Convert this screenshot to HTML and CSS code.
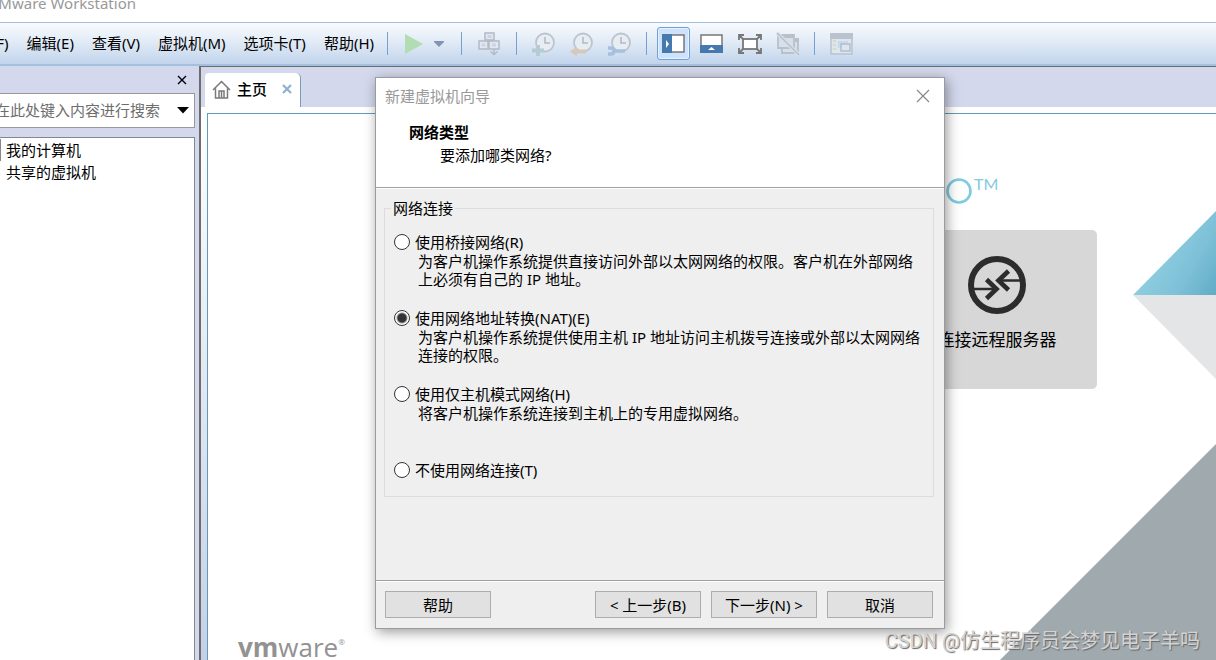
FILE: index.html
```
<!DOCTYPE html>
<html lang="zh-CN">
<head>
<meta charset="utf-8">
<title>VMware Workstation</title>
<link rel="stylesheet" href="styles.css">
</head>
<body>
<div class="app">
  <header class="titlebar"><span class="titlebar-text">VMware Workstation</span></header>

  <div class="menubar">
    <nav class="menu">
      <button class="menu-item">文件(F)</button>
      <button class="menu-item">编辑(E)</button>
      <button class="menu-item">查看(V)</button>
      <button class="menu-item">虚拟机(M)</button>
      <button class="menu-item">选项卡(T)</button>
      <button class="menu-item">帮助(H)</button>
    </nav>
    <div class="toolbar">
      <span class="sep"></span>
      <div class="group group-power">
        <button class="tool" aria-label="开机"><svg width="20" height="22" viewBox="0 0 20 22"><path d="M1 1v20l18-10z" fill="#b2dcb3"/></svg></button>
        <button class="tool" aria-label="电源选项"><svg width="12" height="8" viewBox="0 0 12 8"><path d="M1 1h10v1L6 7 1 2z" fill="#8294b5"/></svg></button>
      </div>
      <span class="sep"></span>
      <div class="group group-send">
        <button class="tool" aria-label="发送"><svg width="22" height="24" viewBox="0 0 22 24" fill="#e2e8f0" stroke="#b3b9c3" stroke-width="1.500"><rect x="7" y="1" width="9" height="7"/><rect x="1" y="9" width="9" height="8"/><rect x="11" y="9" width="10" height="8"/><path d="M9.500 4.500h4M3.500 13h4M14 13h4" stroke="#c7d6e8" stroke-width="3"/><path d="M16 17v5M12.500 19.500l3.500 3 3.500-3" fill="none"/></svg></button>
      </div>
      <span class="sep"></span>
      <div class="group group-snap">
        <button class="tool" aria-label="拍摄快照"><svg width="23" height="24" viewBox="0 0 23 24"><circle cx="13" cy="10.500" r="9" fill="#e8edf4" stroke="#bcc4ce" stroke-width="1.800"/><path d="M13 5v6h5" fill="none" stroke="#b3bbc5" stroke-width="1.600"/><path d="M0 18.500h12M6 13v11" stroke="#b4ccd2" stroke-width="4"/></svg></button>
        <button class="tool" aria-label="恢复快照"><svg width="23" height="24" viewBox="0 0 23 24"><circle cx="13" cy="10.500" r="9" fill="#e8edf4" stroke="#bcc4ce" stroke-width="1.800"/><path d="M13 5v6h5" fill="none" stroke="#b3bbc5" stroke-width="1.600"/><path d="M0 19.500l7-5v3h9v4H7v3z" fill="#d8c8ba"/></svg></button>
        <button class="tool" aria-label="管理快照"><svg width="23" height="24" viewBox="0 0 23 24"><circle cx="13" cy="10.500" r="9" fill="#e8edf4" stroke="#bcc4ce" stroke-width="1.800"/><path d="M13 5v6h5" fill="none" stroke="#b3bbc5" stroke-width="1.600"/><path d="M0 16h3q3 0 3 3t-3 3H0M6 19h11" fill="none" stroke="#a6c0de" stroke-width="3.500"/></svg></button>
      </div>
      <span class="sep"></span>
      <div class="group group-view">
        <button class="tool view-tool active" aria-label="显示库"><svg width="23" height="19" viewBox="0 0 23 19"><rect x="1" y="1" width="21" height="17" fill="#fff" stroke="#777" stroke-width="1.500"/><path d="M0 0h10v19H0z" fill="#4679ad"/><path d="M4 6v8l3-4z" fill="#fff"/></svg></button>
        <button class="tool view-tool" aria-label="显示缩略图"><svg width="23" height="19" viewBox="0 0 23 19"><rect x="1" y="1" width="21" height="17" fill="#fff" stroke="#777" stroke-width="1.500"/><path d="M0 11h23v8H0z" fill="#4679ad"/><path d="M8 16h7l-3.500-3z" fill="#fff"/></svg></button>
        <button class="tool view-tool" aria-label="全屏"><svg width="24" height="20" viewBox="0 0 24 20" stroke="#777" stroke-width="1.800" fill="none"><rect x="5" y="5" width="14" height="10" fill="#fff"/><path d="M1 6V1h5M1 1l4 4M18 1h5v5M23 1l-4 4M1 14v5h5M1 19l4-4M18 19h5v-5M23 19l-4-4"/></svg></button>
        <button class="tool view-tool" aria-label="Unity"><svg width="24" height="24" viewBox="0 0 24 24" fill="#d6e0ec" stroke="#b9c0ca" stroke-width="1.800"><path d="M6 8h16v13H6z"/><path d="M19 8h4" stroke-width="4"/><path d="M2 3h16v13H2z"/><path d="M2 4h16" stroke-width="4"/><path d="M1 1l22 22" stroke="#d9dfe7" stroke-width="4"/><path d="M1 1l22 22" stroke-width="1.500"/></svg></button>
      </div>
      <span class="sep"></span>
      <div class="group">
        <button class="tool" aria-label="控制台视图"><svg width="23" height="22" viewBox="0 0 23 22"><rect x="1" y="1" width="21" height="20" fill="#dce6f0" stroke="#bac2cd" stroke-width="1.500"/><path d="M0 0h23v6H0z" fill="#bac2cd"/><path d="M3 8h3M3 12h3M3 16h3" stroke="#dcd9bc" stroke-width="2"/><path d="M8 8h10v7H8z" fill="#c9dbeb"/><rect x="11" y="11" width="9" height="7" fill="#dce6f0" stroke="#b4bdc9" stroke-width="1.500"/></svg></button>
      </div>
    </div>
  </div>

  <div class="workspace">
    <aside class="sidebar">
      <div class="sidebar-head">
        <button class="plain" aria-label="关闭库"><svg width="10" height="10" viewBox="0 0 10 10"><path d="M1 1l8 8M9 1L1 9" stroke="#000" stroke-width="1.400"/></svg></button>
      </div>
      <div class="search">
        <input class="search-input" type="text" aria-label="搜索" placeholder="在此处键入内容进行搜索" dir="rtl">
        <button class="plain" aria-label="搜索选项"><svg width="12" height="7" viewBox="0 0 12 7"><path d="M0 0h12L6 6.500z" fill="#000"/></svg></button>
      </div>
      <ul class="tree">
        <li class="tree-item tree-root">我的计算机</li>
        <li class="tree-item">共享的虚拟机</li>
      </ul>
    </aside>

    <main class="main">
      <div class="tabs">
        <div class="tab">
          <svg width="19" height="19" viewBox="0 0 19 19" fill="none" stroke="#7a7a7a" stroke-width="1.500"><path d="M1 10l8.500-8.500L18 10M3.500 8.500V18h12V8.500M7 18v-7h5v7M9.500 11v7"/></svg>
          <span class="tab-label">主页</span>
          <button class="plain" aria-label="关闭标签"><svg width="10" height="10" viewBox="0 0 10 10"><path d="M1 1l8 8M9 1L1 9" stroke="#8db1cf" stroke-width="2.200"/></svg></button>
        </div>
      </div>
      <div class="page">
        <div class="home">
          <svg class="art" width="216" height="449" viewBox="0 0 216 449">
            <defs><linearGradient id="sky" gradientUnits="userSpaceOnUse" x1="160" y1="40" x2="222" y2="76"><stop offset="0" stop-color="#8ecde0"/><stop offset="0.500" stop-color="#7dc0d7"/><stop offset="1" stop-color="#60abc6"/></linearGradient></defs>
            <path d="M133 84L216 0v84z" fill="url(#sky)"/>
            <path d="M133 84h83v84z" fill="#e4e5e7"/>
            <path d="M216 233v216H0z" fill="#9fa9ae"/>
          </svg>
          <div class="brand">
            <svg width="26" height="26" viewBox="0 0 26 26"><circle cx="13" cy="13" r="11.500" fill="none" stroke="#7fcbdf" stroke-width="2.600"/></svg>
            <span class="brand-tm">TM</span>
          </div>
          <button class="card">
            <svg width="58" height="58" viewBox="0 0 58 58" fill="none" stroke="#2c2c2c"><circle cx="29" cy="29" r="26" stroke-width="6"/><path d="M6 33h23M52 24.500H30" stroke-width="2.600"/><path d="M18.500 23.500L28.500 33l-10 9.500M40.500 15L30.500 24.500l10 9.500" stroke-width="4.600"/></svg>
            <span>连接远程服务器</span>
          </button>
          <div class="vmware"><b>vm</b>ware<span class="reg">®</span></div>
        </div>
      </div>
    </main>
  </div>

  <section class="dialog" role="dialog" aria-labelledby="dlg-title">
    <div class="dialog-head">
      <div class="dialog-title">
        <span id="dlg-title">新建虚拟机向导</span>
        <button class="plain" aria-label="关闭"><svg width="14" height="14" viewBox="0 0 14 14"><path d="M1 1l12 12M13 1L1 13" stroke="#888" stroke-width="1.200"/></svg></button>
      </div>
      <h1 class="step-title">网络类型</h1>
      <p class="step-text">要添加哪类网络?</p>
    </div>
    <div class="dialog-body">
      <fieldset class="group-box">
        <legend>网络连接</legend>
        <div class="option">
          <label class="option-label"><input type="radio" name="net">使用桥接网络(R)</label>
          <p class="option-text">为客户机操作系统提供直接访问外部以太网网络的权限。客户机在外部网络<br>上必须有自己的 IP 地址。</p>
        </div>
        <div class="option">
          <label class="option-label"><input type="radio" name="net" checked>使用网络地址转换(NAT)(E)</label>
          <p class="option-text">为客户机操作系统提供使用主机 IP 地址访问主机拨号连接或外部以太网网络<br>连接的权限。</p>
        </div>
        <div class="option">
          <label class="option-label"><input type="radio" name="net">使用仅主机模式网络(H)</label>
          <p class="option-text">将客户机操作系统连接到主机上的专用虚拟网络。</p>
        </div>
        <div class="option">
          <label class="option-label"><input type="radio" name="net">不使用网络连接(T)</label>
        </div>
      </fieldset>
    </div>
    <div class="dialog-foot">
      <button class="btn btn-help">帮助</button>
      <button class="btn">&lt; 上一步(B)</button>
      <button class="btn">下一步(N) &gt;</button>
      <button class="btn">取消</button>
    </div>
  </section>

  <div class="watermark">CSDN @仿生程序员会梦见电子羊吗</div>
</div>
</body>
</html>
```

FILE: styles.css
```
* { box-sizing: border-box; }

body {
  margin: 0;
  font: 15px/20px "Noto Sans", "Noto Sans CJK SC", sans-serif;
  color: #000;
}

button {
  font: inherit;
  color: inherit;
  padding: 0;
  border: 0;
  background: none;
  white-space: nowrap;
}

svg { display: block; flex: none; }
p, h1, ul { margin: 0; padding: 0; }

.app {
  position: relative;
  display: flex;
  flex-direction: column;
  height: 100vh;
  overflow: hidden;
}

/* Title bar */
.titlebar {
  display: flex;
  justify-content: flex-end;
  flex: none;
  width: 136px;
  height: 22px;
  line-height: 6px;
  color: #999;
  white-space: nowrap;
}

/* Menu and toolbar */
.menubar {
  display: flex;
  align-items: center;
  flex: none;
  height: 44px;
  border-top: 1px solid #9cc0e4;
  border-bottom: 2px solid #a3c0e0;
  background: linear-gradient(#f9fbfe, #dfe9f5 50%, #c1d4ec);
}
.menu {
  display: flex;
  justify-content: flex-end;
  gap: 18px;
  width: 374px;
  margin-right: 13px;
  padding-bottom: 2px;
  overflow: hidden;
}
.toolbar { display: flex; align-items: center; }
.sep {
  width: 1px;
  height: 23px;
  margin-right: 15px;
  background: #779fd2;
}
.group { display: flex; align-items: center; margin-right: 15px; }
.group-power { gap: 9px; padding: 0 1px; }
.group-send { padding: 0 1px; }
.group-snap { gap: 15px; }
.group-view { gap: 5px; margin: 0 10px 0 -5px; }
.view-tool {
  display: flex;
  align-items: center;
  justify-content: center;
  width: 33px;
  height: 33px;
  border: 1px solid transparent;
  border-radius: 3px;
}
.active {
  border-color: #6f9fd8;
  background: #cfe2fb;
  box-shadow: inset 0 0 0 1px #e8f2fe;
}

/* Library panel */
.workspace {
  display: flex;
  flex: 1;
  min-height: 0;
  background: #d3d8ec;
}
.sidebar {
  display: flex;
  flex-direction: column;
  flex: none;
  width: 199px;
  padding-right: 4px;
}
.sidebar-head {
  display: flex;
  align-items: center;
  justify-content: flex-end;
  height: 27px;
  padding-right: 8px;
}
.search {
  display: flex;
  align-items: center;
  gap: 17px;
  height: 35px;
  padding-right: 5px;
  border: 1px solid #999;
  border-left: 0;
  background: #fff;
}
.search-input {
  flex: 1;
  min-width: 0;
  padding: 0 0 2px;
  border: 0;
  outline: 0;
  font: inherit;
  background: none;
}
.search-input::placeholder { color: #6d6d6d; }
.tree {
  flex: 1;
  margin-top: 9px;
  padding-top: 1px;
  border: 1px solid #828790;
  border-width: 1px 1px 0 0;
  background: #fff;
  list-style: none;
}
.tree-item { padding-left: 6px; line-height: 22px; }
.tree-root { box-shadow: inset 1px 0 #888; }

/* Tabs and home page */
.main {
  display: flex;
  flex-direction: column;
  flex: 1;
  min-width: 0;
  border-top: 1px solid #6c6c6c;
  border-left: 2px solid #6c6c6c;
}
.tabs { height: 40px; padding: 6px 0 0 4px; }
.tab {
  display: flex;
  align-items: center;
  width: 96px;
  height: 34px;
  padding: 0 8px 2px 7px;
  border-right: 1px solid #7a9cb5;
  border-radius: 4px 5px 0 0;
  background: #fff;
}
.tab-label { flex: 1; padding-left: 6px; font-weight: 500; }
.page {
  flex: 1;
  display: flex;
  padding: 6px 0 0 6px;
  background: linear-gradient(#fff, #c4d0e8);
}
.home {
  position: relative;
  display: flex;
  flex-direction: column;
  flex: 1;
  padding-top: 64px;
  border-top: 1px solid #5f9cb5;
  border-left: 1px solid #5f9cb5;
  background: #fff;
}
.art { position: absolute; right: 0; bottom: 0; }
.brand {
  display: flex;
  align-items: flex-start;
  height: 52px;
  margin-left: 738px;
}
.brand-tm {
  padding-left: 2px;
  font: 16px/12px "Lato", sans-serif;
  color: #7fcbdf;
}
.card {
  display: flex;
  flex-direction: column;
  align-items: center;
  gap: 14px;
  width: 200px;
  height: 159px;
  margin-left: 689px;
  padding-top: 26px;
  border-radius: 5px;
  background: #d7d7d7;
  font-size: 17px;
  line-height: 24px;
}
.vmware {
  display: flex;
  align-items: flex-start;
  margin: auto 0 0 30px;
  font: 26px/26px "Open Sans", sans-serif;
  color: #929292;
}
.reg { font-size: 8px; line-height: 16px; }

/* Wizard dialog */
.dialog {
  position: absolute;
  left: 375px;
  top: 77px;
  width: 570px;
  border: 1px solid #999ba1;
  background: #efefef;
  box-shadow: 2px 3px 12px rgba(0, 0, 0, 0.4);
}
.dialog-head {
  height: 110px;
  padding: 8px 14px 0 9px;
  border-bottom: 1px solid #a0a0a0;
  background: #fff;
}
.dialog-title {
  display: flex;
  align-items: center;
  justify-content: space-between;
  color: #999;
}
.step-title {
  margin: 16px 0 0 24px;
  font-size: 15px;
  line-height: 20px;
}
.step-text { margin: 3px 0 0 55px; }
.dialog-body {
  min-height: 392px;
  padding: 10px 10px 0 8px;
  border-top: 1px solid #fff;
}
.group-box {
  min-width: 0;
  margin: 0;
  padding: 15px 9px 16px;
  border: 1px solid #dcdcdc;
}
legend { margin-left: -3px; padding: 0 2px; line-height: 18px; }
.option:not(:last-child) { min-height: 76px; }
.option-label { display: flex; align-items: center; gap: 5px; }
.option-label input {
  appearance: none;
  width: 16px;
  height: 16px;
  margin: 0;
  border: 1px solid #333;
  border-radius: 50%;
  background: #fff;
}
.option-label input:checked {
  background: radial-gradient(circle, #333 0 4px, #fff 6px);
}
.option-text { padding-left: 24px; line-height: 18px; white-space: nowrap; }
.dialog-foot {
  display: flex;
  gap: 10px;
  padding: 10px 11px 10px 9px;
  border-top: 1px solid #a0a0a0;
  box-shadow: inset 0 1px #fff;
}
.btn {
  width: 106px;
  height: 27px;
  border: 1px solid #adadad;
  background: #e1e1e1;
}
.btn-help { margin-right: auto; }

.watermark {
  position: absolute;
  right: 16px;
  bottom: 5px;
  font: 20px/28px "Roboto", "Noto Sans CJK SC", sans-serif;
  color: #d3d3d3;
  text-shadow: 1px 1px 1px #666;
}
```
